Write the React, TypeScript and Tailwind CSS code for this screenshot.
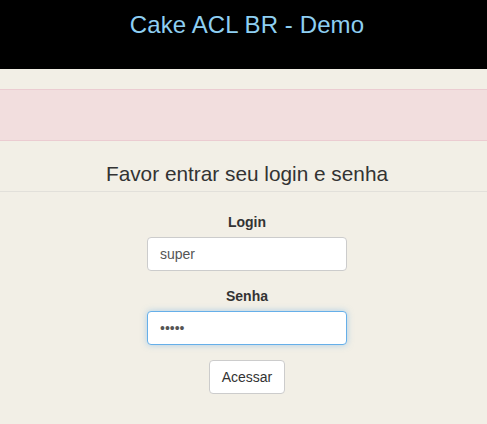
export default function App() {
  return (
    <div className="min-h-[424px] bg-[#f2efe6] font-['Liberation_Sans',Arial,sans-serif] text-[#333]">
      {/* Header */}
      <div className="h-[69px] bg-black pl-[7px] pt-[11px] text-center">
        <h1 className="text-[24px] leading-[28px] tracking-[0.1px] text-[#8ecff2]">Cake ACL BR - Demo</h1>
      </div>

      {/* Flash message area */}
      <div className="mt-[20px] h-[52px] border-y border-[#ebccd1] bg-[#f2dede]" />

      {/* Login */}
      <div className="pt-[21px] text-center">
        <h3 className="border-b border-[#e2e0da] pb-[5px] pl-[7px] text-[20.8px] leading-[24px] text-[#333]">
          Favor entrar seu login e senha
        </h3>
        <form className="flex flex-col items-center pl-[7px] pt-[21px]" onSubmit={(e) => e.preventDefault()}>
          <label className="mb-[6px] text-[14px] font-bold leading-[18px]">Login</label>
          <input
            type="text"
            defaultValue="super"
            className="h-[34px] w-[200px] rounded-[4px] border border-[#ccc] bg-white px-[12px] text-[14px] text-[#555] outline-none"
          />
          <label className="mb-[6px] mt-[16px] text-[14px] font-bold leading-[18px]">Senha</label>
          <input
            type="password"
            defaultValue="12345"
            className="h-[34px] w-[200px] rounded-[4px] border border-[#66afe9] bg-white px-[12px] text-[14px] text-[#555] shadow-[0_0_6px_rgba(102,175,233,0.5)] outline-none"
          />
          <button
            type="submit"
            className="mt-[15px] h-[34px] w-[76px] rounded-[4px] border border-[#ccc] bg-white text-[14px] text-[#333]"
          >
            Acessar
          </button>
        </form>
      </div>
    </div>
  );
}
